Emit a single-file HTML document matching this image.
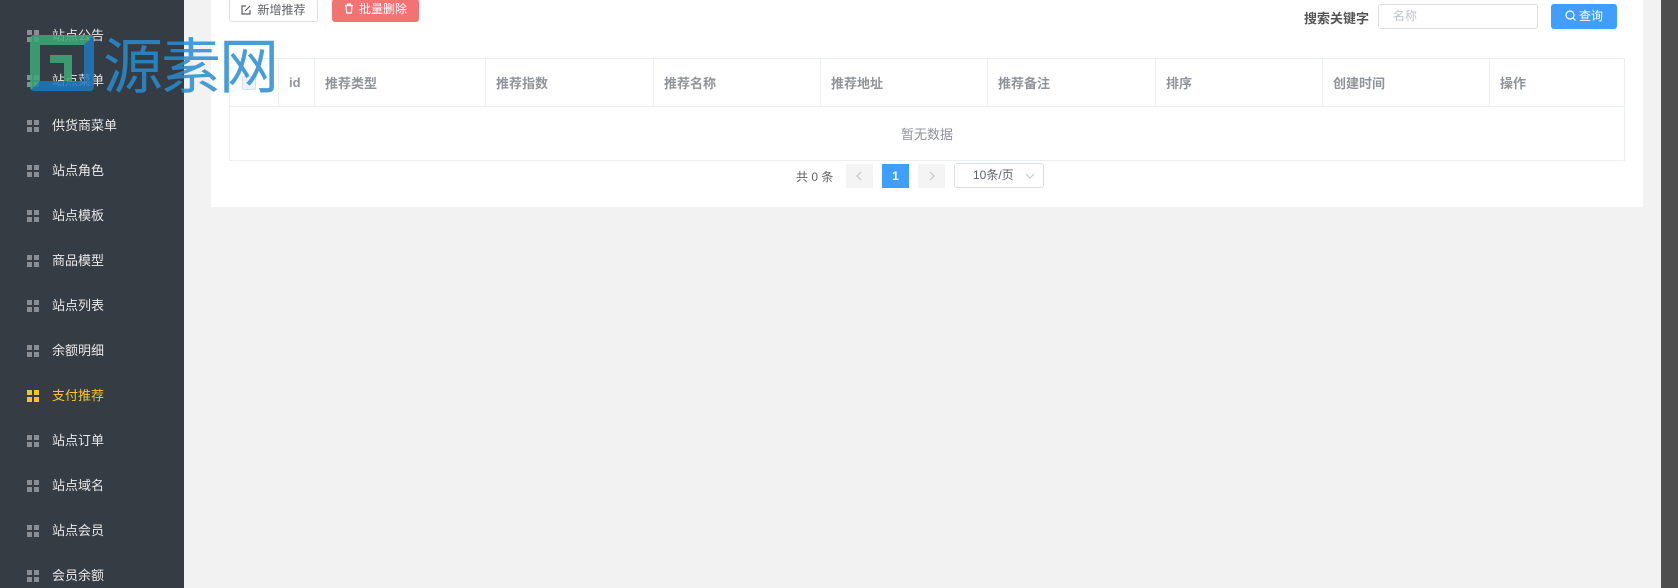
<!DOCTYPE html>
<html><head><meta charset="utf-8"><style>
*{margin:0;padding:0;box-sizing:border-box}
body{width:1678px;height:588px;overflow:hidden;background:#f2f2f2;font-family:"Liberation Sans","Noto Sans CJK SC",sans-serif;font-size:13px;position:relative}
.side{position:absolute;left:0;top:0;width:184px;height:588px;background:#353c44}
.item{position:absolute;left:0;height:20px;line-height:20px;color:#e8e8e8;font-size:13px}
.item .ic{position:absolute;left:27px;top:4px;width:12px;height:12px}
.item .ic i{position:absolute;width:5px;height:5px;background:#8a8d92}
.item span{position:absolute;left:52px;white-space:nowrap}
.act{color:#f7c234}.act .ic i{background:#f7c234}
.card{position:absolute;left:211px;top:0;width:1432px;height:207px;background:#fff}
.btn{position:absolute;height:23px;border-radius:3px;font-size:12px;line-height:21px;text-align:center}
.scroll{position:absolute;left:1661px;top:0;width:17px;height:588px;background:#4e4e4e}
.gap{position:absolute;left:1643px;top:0;width:18px;height:588px;background:#f2f2f2}
table{position:absolute;left:229px;top:58px;width:1396px;border-collapse:collapse}
th{height:48px;border:1px solid #ebeef5;text-align:left;padding-left:10px;font-weight:bold;color:#909399;font-size:13px}
td{height:54px;border:1px solid #ebeef5;text-align:center;color:#909399}
</style></head><body>
<div class="side">
<div class="item" style="top:26px"><div class="ic"><i style="left:0;top:0"></i><i style="left:7px;top:0"></i><i style="left:0;top:7px"></i><i style="left:7px;top:7px"></i></div><span>站点公告</span></div>
<div class="item" style="top:71px"><div class="ic"><i style="left:0;top:0"></i><i style="left:7px;top:0"></i><i style="left:0;top:7px"></i><i style="left:7px;top:7px"></i></div><span>站点菜单</span></div>
<div class="item" style="top:116px"><div class="ic"><i style="left:0;top:0"></i><i style="left:7px;top:0"></i><i style="left:0;top:7px"></i><i style="left:7px;top:7px"></i></div><span>供货商菜单</span></div>
<div class="item" style="top:161px"><div class="ic"><i style="left:0;top:0"></i><i style="left:7px;top:0"></i><i style="left:0;top:7px"></i><i style="left:7px;top:7px"></i></div><span>站点角色</span></div>
<div class="item" style="top:206px"><div class="ic"><i style="left:0;top:0"></i><i style="left:7px;top:0"></i><i style="left:0;top:7px"></i><i style="left:7px;top:7px"></i></div><span>站点模板</span></div>
<div class="item" style="top:251px"><div class="ic"><i style="left:0;top:0"></i><i style="left:7px;top:0"></i><i style="left:0;top:7px"></i><i style="left:7px;top:7px"></i></div><span>商品模型</span></div>
<div class="item" style="top:296px"><div class="ic"><i style="left:0;top:0"></i><i style="left:7px;top:0"></i><i style="left:0;top:7px"></i><i style="left:7px;top:7px"></i></div><span>站点列表</span></div>
<div class="item" style="top:341px"><div class="ic"><i style="left:0;top:0"></i><i style="left:7px;top:0"></i><i style="left:0;top:7px"></i><i style="left:7px;top:7px"></i></div><span>余额明细</span></div>
<div class="item act" style="top:386px"><div class="ic"><i style="left:0;top:0"></i><i style="left:7px;top:0"></i><i style="left:0;top:7px"></i><i style="left:7px;top:7px"></i></div><span>支付推荐</span></div>
<div class="item" style="top:431px"><div class="ic"><i style="left:0;top:0"></i><i style="left:7px;top:0"></i><i style="left:0;top:7px"></i><i style="left:7px;top:7px"></i></div><span>站点订单</span></div>
<div class="item" style="top:476px"><div class="ic"><i style="left:0;top:0"></i><i style="left:7px;top:0"></i><i style="left:0;top:7px"></i><i style="left:7px;top:7px"></i></div><span>站点域名</span></div>
<div class="item" style="top:521px"><div class="ic"><i style="left:0;top:0"></i><i style="left:7px;top:0"></i><i style="left:0;top:7px"></i><i style="left:7px;top:7px"></i></div><span>站点会员</span></div>
<div class="item" style="top:566px"><div class="ic"><i style="left:0;top:0"></i><i style="left:7px;top:0"></i><i style="left:0;top:7px"></i><i style="left:7px;top:7px"></i></div><span>会员余额</span></div>
</div>
<div class="card"></div>
<div class="btn" style="left:229px;top:-1px;width:89px;border:1px solid #dcdfe6;color:#606266;background:#fff"><svg width="10" height="10" viewBox="0 0 10 10" style="vertical-align:-1px;margin-right:6px"><path d="M5 1H1v8h8V5M4 6l5-5" fill="none" stroke="#606266" stroke-width="1.2"/></svg>新增推荐</div>
<div class="btn" style="left:332px;top:-1px;width:87px;background:#f37373;color:#fff"><svg width="10" height="11" viewBox="0 0 10 11" style="vertical-align:-1px;margin-right:5px"><path d="M1 2.5h8M3.5 2.5V1h3v1.5M2 2.5l.7 7.5h4.6L8 2.5" fill="none" stroke="#fff" stroke-width="1.2"/></svg>批量删除</div>
<div style="position:absolute;left:1304px;top:8px;font-weight:bold;color:#555;font-size:13px">搜索关键字</div>
<div style="position:absolute;left:1378px;top:4px;width:160px;height:25px;border:1px solid #dcdfe6;border-radius:3px;color:#c0c4cc;font-size:12px;line-height:23px;padding-left:14px">名称</div>
<div class="btn" style="left:1551px;top:4px;width:66px;height:25px;line-height:25px;background:#409eff;color:#fff"><svg width="11" height="11" viewBox="0 0 11 11" style="vertical-align:-1px;margin-right:3px"><circle cx="5" cy="5" r="4" fill="none" stroke="#fff" stroke-width="1.2"/><path d="M8 8l2.5 2.5" stroke="#fff" stroke-width="1.2"/></svg>查询</div>
<table><tr>
<th style="width:49px"><span style="display:inline-block;width:14px;height:14px;border:1px solid #dcdfe6;border-radius:2px;margin-left:2px;vertical-align:middle;background:#edf2fc"></span></th><th style="width:36px">id</th><th style="width:171px">推荐类型</th><th style="width:168px">推荐指数</th><th style="width:167px">推荐名称</th><th style="width:167px">推荐地址</th><th style="width:168px">推荐备注</th><th style="width:167px">排序</th><th style="width:167px">创建时间</th><th>操作</th>
</tr><tr><td colspan="10">暂无数据</td></tr></table>
<div style="position:absolute;left:796px;top:168px;color:#606266;font-size:12px">共 0 条</div>
<div style="position:absolute;left:846px;top:164px;width:27px;height:24px;background:#f4f4f5"><svg width="27" height="24"><path d="M15 8l-4 4 4 4" fill="none" stroke="#c0c4cc" stroke-width="1.2"/></svg></div>
<div style="position:absolute;left:882px;top:164px;width:27px;height:24px;background:#409eff;color:#fff;text-align:center;line-height:24px;font-weight:bold;font-size:12px">1</div>
<div style="position:absolute;left:918px;top:164px;width:27px;height:24px;background:#f4f4f5"><svg width="27" height="24"><path d="M12 8l4 4-4 4" fill="none" stroke="#c0c4cc" stroke-width="1.2"/></svg></div>
<div style="position:absolute;left:954px;top:163px;width:90px;height:25px;border:1px solid #dcdfe6;border-radius:3px;color:#606266;font-size:12px;line-height:23px;padding-left:18px">10条/页<svg width="10" height="6" style="position:absolute;right:8px;top:9px"><path d="M1 1l4 4 4-4" fill="none" stroke="#c0c4cc" stroke-width="1"/></svg></div>
<div class="gap"></div><div class="scroll"></div>
<div style="position:absolute;left:30px;top:35px;width:64px;height:56px;border:10px solid rgba(60,170,120,.85);border-radius:4px;border-right-color:rgba(30,120,190,.85);border-bottom-color:rgba(30,120,190,.85)"></div>
<div style="position:absolute;left:50px;top:55px;width:22px;height:26px;border-top:8px solid rgba(60,170,120,.85);border-right:8px solid rgba(60,170,120,.85)"></div>
<div style="position:absolute;left:103px;top:30px;font-size:60px;line-height:66px;color:rgba(40,140,210,.85);font-family:'Noto Sans CJK SC',sans-serif;letter-spacing:-2px">源素网</div>
</body></html>
